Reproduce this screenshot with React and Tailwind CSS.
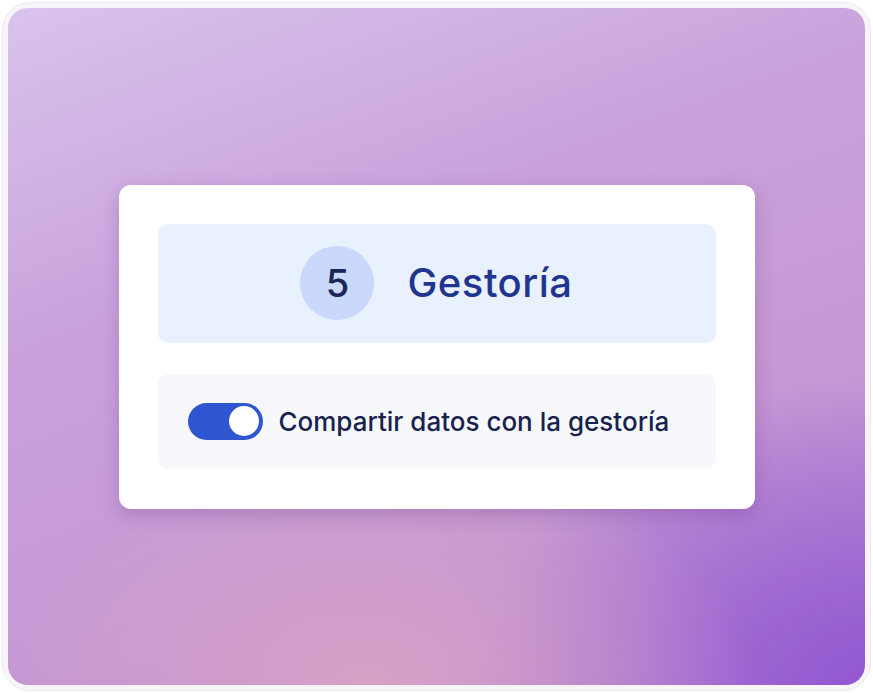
export default function App() {
  return (
    <div
      className="w-[873px] h-[693px] bg-white p-[2px]"
      style={{ fontFamily: "Inter, 'Noto Sans', sans-serif" }}
    >
      <div className="w-full h-full rounded-[28px] border border-[#ece8f1] bg-[#f8f6fb] p-[5px]">
        <div className="w-full h-full rounded-[20px] flex items-center justify-center bg-[radial-gradient(ellipse_45%_35%_at_42%_100%,#d7a2c6_0%,rgba(215,162,198,0)_100%),radial-gradient(ellipse_45%_45%_at_100%_100%,#9257d1_0%,rgba(146,87,209,0)_100%),linear-gradient(160deg,#d9c3ee_0%,#c9a2dc_35%,#c596d4_70%,#b27cd2_100%)]">
          <div className="w-[636px] h-[324px] bg-white rounded-[12px] shadow-[0_6px_18px_rgba(90,40,120,0.25)] px-[39px] pt-[39px] flex flex-col gap-[31px]">
            <div className="h-[119px] rounded-[10px] bg-[#e9f0fe] flex items-center justify-center gap-[33px]">
              <div className="w-[74px] h-[74px] rounded-full bg-[#c9d8fb] flex items-center justify-center text-[38px] font-medium text-[#1b2656]">
                5
              </div>
              <span className="text-[40px] font-medium text-[#1f3590] tracking-[0.5px]">Gestoría</span>
            </div>
            <div className="h-[95px] rounded-[10px] bg-[#f7f8fc] flex items-center pl-[30px] gap-[16px]">
              <div className="w-[75px] h-[37px] rounded-full bg-[#2f55d0] flex items-center justify-end pr-[4px]">
                <div className="w-[30px] h-[30px] rounded-full bg-white" />
              </div>
              <span className="text-[26px] font-medium text-[#19224d]">Compartir datos con la gestoría</span>
            </div>
          </div>
        </div>
      </div>
    </div>
  );
}
